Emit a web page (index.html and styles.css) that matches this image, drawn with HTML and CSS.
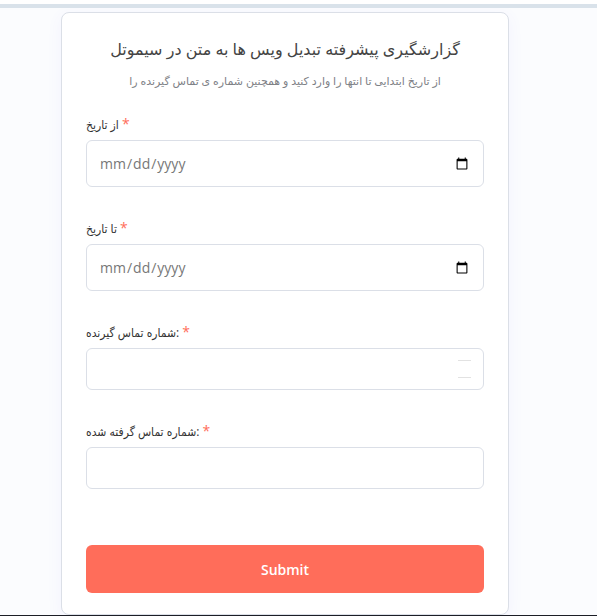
FILE: index.html
```html
<!DOCTYPE html>
<html lang="fa">
<head>
  <meta charset="UTF-8">
  <title>گزارشگیری تبدیل ویس به متن</title>
  <link rel="stylesheet" href="styles.css">
</head>
<body>

<form class="card">
  <h1 class="title">گزارشگیری پیشرفته تبدیل ویس ها به متن در سیموتل</h1>
  <p class="subtitle">از تاریخ ابتدایی تا انتها را وارد کنید و همچنین شماره ی تماس گیرنده را</p>

  <div class="field">
    <label for="fromDate">از تاریخ <span class="required">*</span></label>
    <input type="date" id="fromDate" lang="en-US">
  </div>

  <div class="field">
    <label for="toDate">تا تاریخ <span class="required">*</span></label>
    <input type="date" id="toDate" lang="en-US">
  </div>

  <div class="field">
    <label for="caller">شماره تماس گیرنده: <span class="required">*</span></label>
    <div class="number-box">
      <input type="text" inputmode="numeric" id="caller">
      <span class="spinner"></span>
    </div>
  </div>

  <div class="field">
    <label for="callee">شماره تماس گرفته شده: <span class="required">*</span></label>
    <input type="text" inputmode="numeric" id="callee">
  </div>

  <button type="submit">Submit</button>
</form>

</body>
</html>
```

FILE: styles.css
```css
* {
  box-sizing: border-box;
}
html {
  border-top: 4px solid #fff;
}
body {
  margin: 0;
  padding: 4px 88px 0 61px;
  border-top: 4px solid #d9e2ea;
  border-bottom: 1px solid #1c1e26;
  background: #fbfcfe;
  font-family: "Open Sans", "DejaVu Sans", sans-serif;
  color: #444;
}
.card {
  max-width: 448px;
  margin: 0 auto;
  padding: 24px 24px 21px;
  background: #fff;
  border: 1px solid #dbdfe7;
  border-radius: 8px;
  box-shadow: 0 4px 16px rgba(99, 77, 255, 0.06);
}
.title {
  margin: 0;
  font-size: 16px;
  font-weight: 400;
  line-height: 24px;
  text-align: center;
}
.subtitle {
  margin: 10px 0 24px;
  font-size: 11px;
  line-height: 20px;
  text-align: center;
  color: #7e8186;
}
.field {
  margin-bottom: 32px;
}
label {
  display: block;
  margin-bottom: 6px;
  font-family: "Open Sans", "DejaVu Sans Condensed", sans-serif;
  font-size: 12px;
  line-height: 19px;
  color: #333;
}
.required {
  font-size: 14px;
  line-height: 1;
  color: #ff6d5a;
}
input {
  display: block;
  width: 100%;
  height: 42px;
  padding: 12px;
  border: 1px solid #dbdfe7;
  border-radius: 6px;
  background: #fff;
  font-family: inherit;
  font-size: 14px;
  color: #777;
}
input[type="date"] {
  height: 47px;
}
.number-box {
  position: relative;
}
.spinner {
  position: absolute;
  top: 12px;
  right: 13px;
  width: 13px;
  height: 18px;
  border-top: 1px solid #e2e2e2;
  border-bottom: 1px solid #e2e2e2;
}
button {
  width: 100%;
  height: 48px;
  margin-top: 24px;
  border: none;
  border-radius: 6px;
  background: #ff6d5a;
  color: #fff;
  font-family: inherit;
  font-size: 14px;
  font-weight: 600;
}
```
